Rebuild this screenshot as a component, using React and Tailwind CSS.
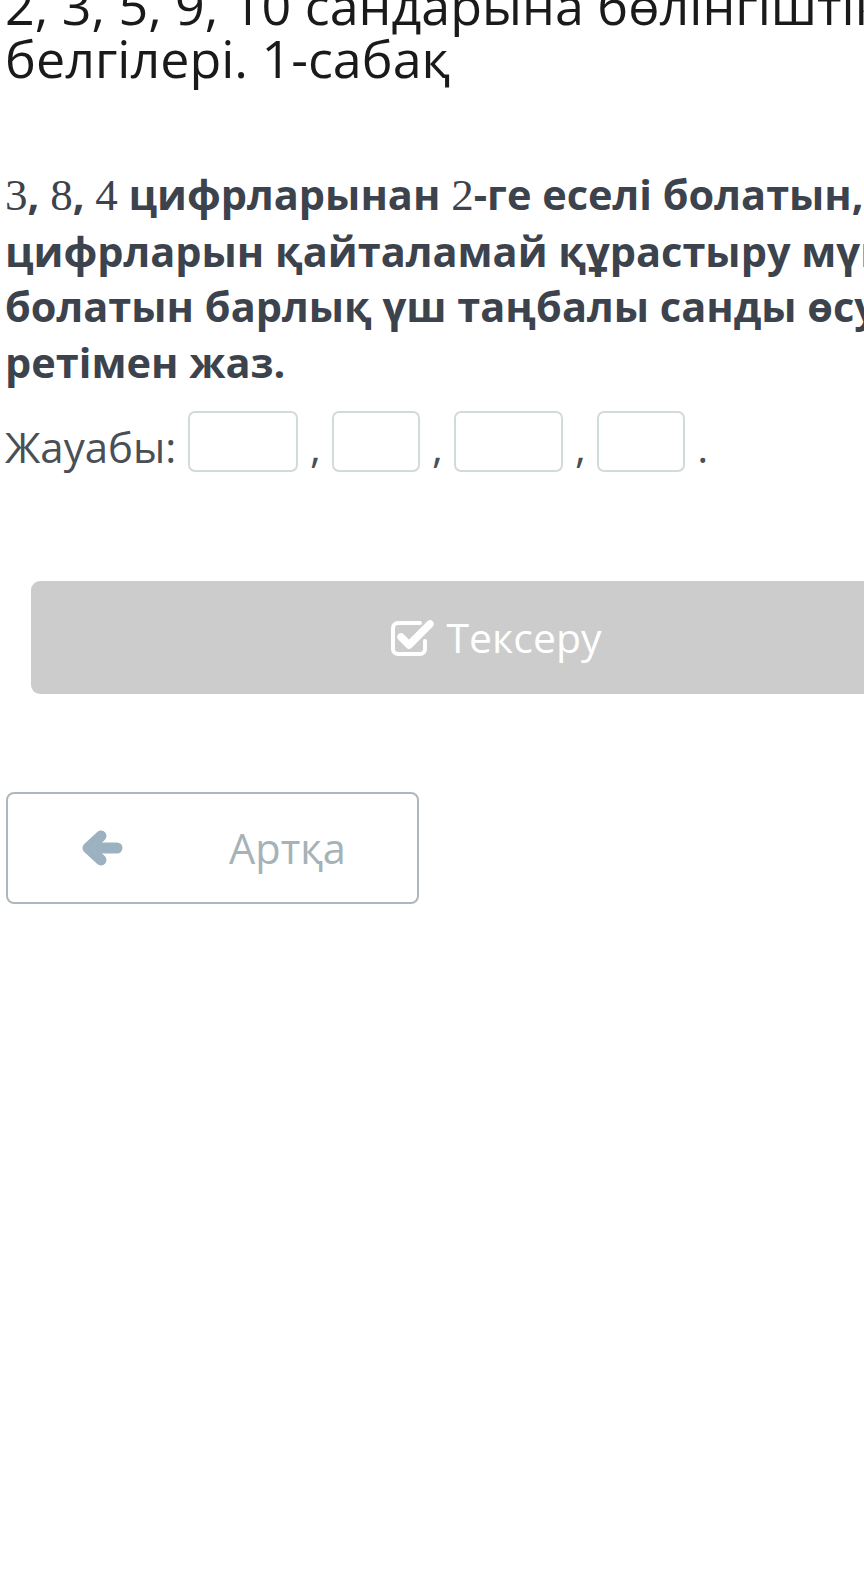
import React from "react";

function CheckSquare() {
  return (
    <svg width="46" height="40" viewBox="0 0 46 40" fill="none">
      <path
        d="M30 5 H8 a5 5 0 0 0 -5 5 V31 a5 5 0 0 0 5 5 H30 a5 5 0 0 0 5 -5 V23"
        stroke="white"
        strokeWidth="4"
        strokeLinecap="round"
      />
      <path
        d="M11 19 L19 27 L40 6"
        stroke="white"
        strokeWidth="7.5"
        strokeLinecap="round"
        strokeLinejoin="round"
      />
    </svg>
  );
}

function ArrowLeft() {
  return (
    <svg width="42" height="36" viewBox="0 0 42 36" fill="none">
      <path d="M36 18 H10" stroke="#9cb2c1" strokeWidth="11" strokeLinecap="round" />
      <path
        d="M20 6 L7 18 L20 30"
        stroke="#9cb2c1"
        strokeWidth="11"
        strokeLinecap="round"
        strokeLinejoin="round"
      />
    </svg>
  );
}

function Box({ w }) {
  return (
    <div
      className={`h-[61px] ${w} shrink-0 rounded-[7px] border-2 border-[#d3dadc] bg-white`}
    />
  );
}

function Sep({ ch }) {
  return (
    <div className="w-[34px] shrink-0 text-center text-[42px] leading-[55px] text-[#4a4f55] mt-[8px]">
      {ch}
    </div>
  );
}

export default function App() {
  const math = { fontFamily: '"Liberation Serif", "DejaVu Serif", serif', fontWeight: 400 };
  return (
    <div
      className="w-[864px] h-[1588px] overflow-hidden bg-white"
      style={{ fontFamily: '"Open Sans", "Noto Sans", sans-serif' }}
    >
      <div className="w-[1000px] pl-[5px]">
        <h1 className="mt-[-22px] text-[52px] leading-[53px] font-normal text-[#1a1a1a] whitespace-nowrap">
          <div>2, 3, 5, 9, 10 сандарына бөлінгіштік</div>
          <div>белгілері. 1-сабақ</div>
        </h1>

        <div className="mt-[83px] text-[41.5px] leading-[55.5px] font-bold text-[#3d434d] whitespace-nowrap">
          <div>
            <span style={math} className="text-[45px]">3</span>,{" "}
            <span style={math} className="text-[45px]">8</span>,{" "}
            <span style={math} className="text-[45px]">4</span> цифрларынан{" "}
            <span style={math} className="text-[45px]">2</span>-ге еселі болатын,
          </div>
          <div>цифрларын қайталамай құрастыру мүмкін</div>
          <div>болатын барлық үш таңбалы санды өсу</div>
          <div>ретімен жаз.</div>
        </div>

        <div className="mt-[21px] flex items-start">
          <div className="text-[42px] leading-[55px] text-[#4a4f55] mt-[8px] mr-[12px]">
            Жауабы:
          </div>
          <Box w="w-[110px]" />
          <Sep ch="," />
          <Box w="w-[88px]" />
          <Sep ch="," />
          <Box w="w-[109px]" />
          <Sep ch="," />
          <Box w="w-[88px]" />
          <div className="ml-[12px] text-[42px] leading-[55px] text-[#4a4f55] mt-[8px]">.</div>
        </div>

        <div className="mt-[107px] ml-[26px] w-[930px] h-[113px] rounded-[9px] bg-[#cccccc] flex items-center justify-center gap-[10px]">
          <CheckSquare />
          <span className="text-[41px] leading-none text-white">Тексеру</span>
        </div>

        <div className="mt-[98px] ml-[1px] w-[413px] h-[112px] rounded-[8px] border-2 border-[#adb8bc] flex items-center">
          <div className="ml-[73px]">
            <ArrowLeft />
          </div>
          <span className="ml-[106px] text-[41.5px] text-[#a5b2b7]">Артқа</span>
        </div>
      </div>
    </div>
  );
}
